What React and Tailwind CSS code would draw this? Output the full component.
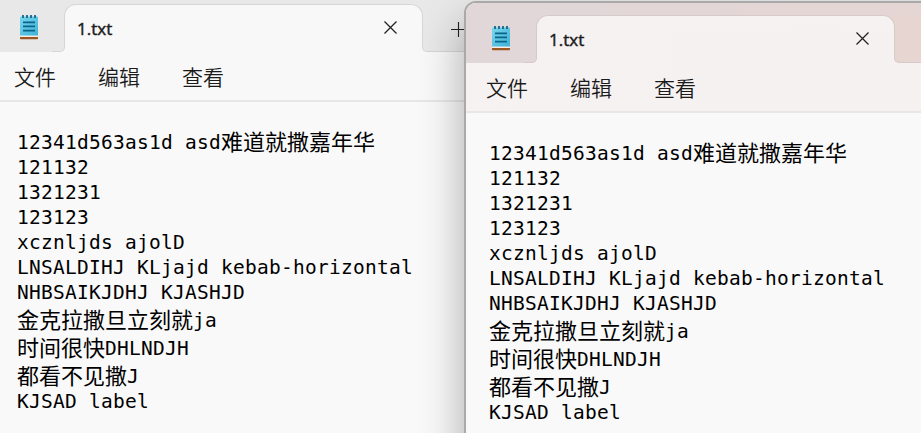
import React from 'react';
import clsx from 'clsx';

const CJK = "font-['Noto_Sans_CJK_SC',sans-serif]";

const lines = [
  ['12341d563as1d asd', '难道就撒嘉年华', ''],
  ['121132'],
  ['1321231'],
  ['123123'],
  ['xcznljds ajolD'],
  ['LNSALDIHJ KLjajd kebab-horizontal'],
  ['NHBSAIKJDHJ KJASHJD'],
  ['', '金克拉撒旦立刻就', 'ja'],
  ['', '时间很快', 'DHLNDJH'],
  ['', '都看不见撒', 'J'],
  ['KJSAD label'],
];

function NotepadIcon() {
  return (
    <svg width="18" height="25" viewBox="0 0 18 25" className="block">
      <defs>
        <linearGradient id="pad" x1="0" y1="0" x2="1" y2="1">
          <stop offset="0" stopColor="#78d6ef" />
          <stop offset="1" stopColor="#3fb2d5" />
        </linearGradient>
      </defs>
      <path d="M0 20h18v3H0z" fill="#f7ede7" />
      <path d="M0 22h18v1.4q0 .8-.8.8H.8q-.8 0-.8-.8z" fill="#9c5622" />
      <path d="M1 1.5h16q1 0 1 1v18H0v-18q0-1 1-1z" fill="url(#pad)" />
      <path d="M3 0v3M7 0v3M11 0v3M15 0v3" stroke="#0d5f7f" strokeWidth="1.7" />
      <path d="M3 7.3h12M3 11.4h12M3 15.6h12" stroke="#0b6389" strokeWidth="1.8" />
    </svg>
  );
}

function NotepadWindow({ active, className }) {
  const line = active ? 'border-[#d8cac9]' : 'border-[#d6d6d6]';
  const surface = active ? 'bg-linear-to-r from-[#f6f2f2] to-[#f7f1f1]' : 'bg-[#f8f8f8]';
  const bar = active ? 'bg-[#e1d7d9]' : 'bg-[#e8e8e8]';
  const barEnd = active ? 'bg-[#e6d5d1]' : 'bg-[#e8e8e8]';
  const strip = active ? 'bg-linear-to-r from-[#e1d7d9] via-[#e4d6d4] via-60% to-[#e6d5d1]' : 'bg-[#e8e8e8]';
  const tab = active ? 'bg-[#f6f2f2]' : 'bg-[#f8f8f8]';

  return (
    <div className={clsx('absolute isolate overflow-hidden bg-[#f9f9f9]', className)}>
      <div className={clsx('flex flex-col', active && '-mt-px -ml-px')}>
        <div className={clsx('flex shrink-0 flex-col', surface)}>
          <div className={clsx('h-[13px]', strip)} />
          <div className="grid h-[48px] grid-cols-[59px_12px_359px_1fr] grid-rows-[12px_36px]">
            <div className={clsx('col-start-1 row-start-1', bar)} />
            <div className={clsx('col-start-2 row-start-1', bar)} />
            <div className={clsx('col-start-3 row-start-1', strip)}>
              <div className={clsx('h-full rounded-t-[12px] border-x border-t', line, tab)} />
            </div>
            <div className={clsx('col-start-4 row-start-1', barEnd)} />
            <div className={clsx('col-start-1 row-start-2', bar)} />
            <div className={clsx('z-10 col-start-2 row-start-2 -mr-px rounded-br-[5px] border-r border-b', line, bar)} />
            <div className={clsx('z-10 col-start-4 row-start-2 -ml-px rounded-bl-[5px] border-b border-l', line, barEnd)} />
            <div className="z-20 col-start-1 row-span-2 row-start-1 pt-[11px] pl-[27px]">
              <NotepadIcon />
            </div>
            <div className="z-20 col-start-3 row-span-2 row-start-1 flex justify-between pt-[13px] pr-[25px] pl-[13px]">
              <span className="font-['Open_Sans',sans-serif] text-[17px] leading-[24px] font-medium text-[#1b1b1b] [-webkit-text-stroke:0.45px_#1b1b1b]">1.txt</span>
              <svg width="15" height="15" viewBox="0 0 15 15" className="mt-[3px]">
                <path d="M1.5 1.5l12 12M13.5 1.5l-12 12" stroke="#222" strokeWidth="1.25" />
              </svg>
            </div>
            <div className="z-20 col-start-4 row-span-2 row-start-1 pt-[18px] pl-[28px]">
              <svg width="15" height="15" viewBox="0 0 15 15" className="block">
                <path d="M0 7.5h15M7.5 0v15" stroke="#222" strokeWidth="1.1" />
              </svg>
            </div>
          </div>
          <div className={clsx('flex h-[50px] gap-[42px] border-b-2 border-[#e8e6e6] pt-[8px] pl-[21px] text-[21px] leading-[32px] font-[350] text-[#1b1b1b]', CJK)}>
            <span>文件</span>
            <span>编辑</span>
            <span>查看</span>
          </div>
        </div>
        <div className="flex flex-col pt-[27px] pl-[24px] font-['DejaVu_Sans_Mono',monospace] text-[19.5px] tracking-[0.26px] text-black">
          {lines.map(([before, cjk, after], i) => (
            <div
              key={i}
              className={clsx('flex whitespace-pre', cjk && !before ? 'h-[28px] pt-[3px]' : 'h-[25px]')}
            >
              {before && <span className="leading-[28px]">{before}</span>}
              {cjk && <span className={clsx('text-[22px] leading-[22px] tracking-normal', CJK)}>{cjk}</span>}
              {after && <span className="leading-[28px]">{after}</span>}
            </div>
          ))}
        </div>
      </div>
    </div>
  );
}

export default function App() {
  return (
    <div className="relative h-[433px] w-[921px] overflow-hidden bg-[#e8e8e8]">
      <NotepadWindow className="-top-[9px] -left-[7px] h-[480px] w-[700px]" />
      <NotepadWindow
        active
        className="top-px left-[464px] h-[480px] w-[700px] rounded-[12px] border-2 border-[#aaa9a9] shadow-[0_22px_44px_rgba(0,0,0,0.32)]"
      />
    </div>
  );
}
